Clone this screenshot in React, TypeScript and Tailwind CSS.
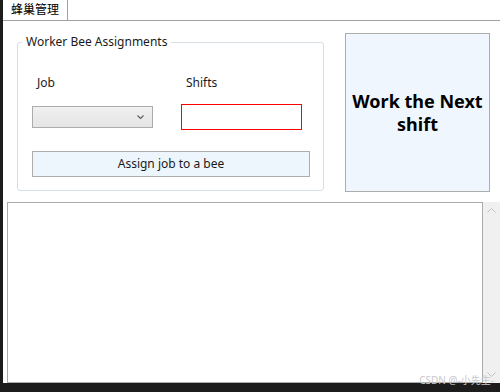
const ui = { fontFamily: '"Noto Sans", "Noto Sans CJK SC", sans-serif' };

const ComboBox = () => (
  <div className="relative h-[22px] w-[121px] border border-[#acacac] bg-gradient-to-b from-[#f0f0f0] to-[#e5e5e5]">
    <svg
      className="absolute right-[8px] top-[8px]"
      width="7"
      height="5"
      viewBox="0 0 7 5"
    >
      <polyline points="0.5,0.5 3.5,3.5 6.5,0.5" fill="none" stroke="#606060" strokeWidth="1.2" />
    </svg>
  </div>
);

const App = () => {
  return (
    <div className="flex h-[392px] w-[500px] bg-[#1c1c1c] pb-[9px] pl-[3px]" style={ui}>
      <div className="flex flex-1 flex-col bg-white">
        {/* tab header */}
        <div className="flex h-[21px] border-b border-[#a0a0a0]">
          <div className="flex items-center border-r border-[#a0a0a0] pl-[8px] pr-[8px] text-[12px] leading-none text-black">
            蜂巢管理
          </div>
        </div>

        <div className="flex pl-[14px] pt-[12px]">
          <fieldset className="mt-[1px] h-[157px] w-[307px] rounded-[3px] border border-[#d5dfe5] p-0">
            <legend className="ml-[4px] px-[4px] text-[12px] leading-[16px] text-[#1a1a1a]">
              Worker Bee Assignments
            </legend>
            <div className="pb-[13px] pl-[14px]">
              <div className="mt-[25px] flex text-[12px] leading-[16px] text-[#1a1a1a]">
                <span className="w-[149px] pl-[5px]">Job</span>
                <span className="pl-[5px]">Shifts</span>
              </div>
              <div className="mt-[13px] flex items-center gap-[28px]">
                <ComboBox />
                <div className="h-[26px] w-[121px] border border-[#ff0000] bg-white" />
              </div>
              <button className="mt-[21px] flex h-[26px] w-[278px] items-center justify-center border border-[#adadad] bg-[#eef6fd] text-[12px] text-[#1a1a1a]">
                Assign job to a bee
              </button>
            </div>
          </fieldset>

          <button className="ml-[21px] flex h-[159px] w-[145px] items-center justify-center border border-[#adadad] bg-[#eff6fe] px-[4px] text-center text-[18px] font-bold leading-[23px] text-black">
            Work the Next shift
          </button>
        </div>

        {/* log box with scrollbar */}
        <div className="relative ml-[4px] mt-[10px] flex flex-1">
          <div className="flex-1 border border-[#ababab] bg-white" />
          <div className="flex w-[17px] flex-col items-center justify-between bg-[#f0f0f0] py-[6px]">
            <svg width="9" height="5" viewBox="0 0 9 5">
              <polyline points="0.5,4.5 4.5,0.5 8.5,4.5" fill="none" stroke="#c2c2c2" strokeWidth="1" />
            </svg>
            <svg width="9" height="5" viewBox="0 0 9 5">
              <polyline points="0.5,0.5 4.5,4.5 8.5,0.5" fill="none" stroke="#c2c2c2" strokeWidth="1" />
            </svg>
          </div>
          <span className="absolute bottom-[-3px] right-[6px] text-[10px] leading-[12px] text-[#c8c8c8]">
            CSDN @-小先生-
          </span>
        </div>
      </div>
    </div>
  );
};

export default App;
